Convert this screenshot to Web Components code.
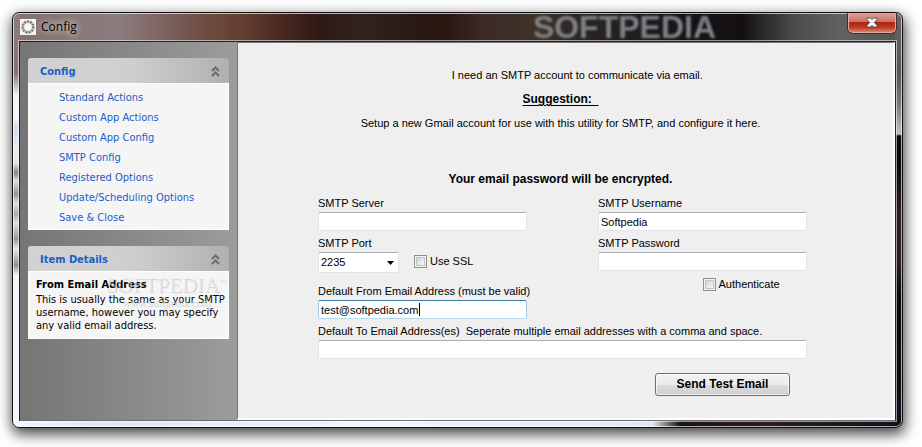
<!DOCTYPE html>
<html lang="en">
<head>
<meta charset="utf-8">
<title>Config</title>
<style>
  html, body { height: 100%; margin: 0; }
  body {
    box-sizing: border-box;
    display: flex;
    padding: 12px 19px 19px 12px;
    background: #fff;
    color: #000;
    font: 11px/17px "Liberation Sans", Arial, sans-serif;
  }
</style>
</head>
<body>

<app-window caption="Config">
  <side-bar slot="side">
    <side-panel heading="Config">
      <nav-list>
        <nav-item>Standard Actions</nav-item>
        <nav-item>Custom App Actions</nav-item>
        <nav-item>Custom App Config</nav-item>
        <nav-item>SMTP Config</nav-item>
        <nav-item>Registered Options</nav-item>
        <nav-item>Update/Scheduling Options</nav-item>
        <nav-item>Save &amp; Close</nav-item>
      </nav-list>
    </side-panel>
    <side-panel heading="Item Details">
      <item-details heading="From Email Address">This is usually the same as your SMTP username, however you may specify any valid email address.</item-details>
    </side-panel>
  </side-bar>
  <smtp-form></smtp-form>
</app-window>

<script>
/**
 * Small base class, attaches the shadow root and fills it from render()
 **/
class BaseElement extends HTMLElement {
  constructor() {
    super();
    this.attachShadow({ mode: "open" });
  }

  connectedCallback() {
    this.shadowRoot.innerHTML = this.render();
  }

  attr(name) {
    return this.getAttribute(name) || "";
  }
}

class AppWindow extends BaseElement {
  render() {
    return `
      <style>
        :host {
          flex: 1;
          display: flex;
          flex-direction: column;
          box-sizing: border-box;
          min-width: 0;
          padding: 0 6px 6px;
          border: 1px solid #111;
          border-radius: 7px;
          /* glass frame: left edge, right edge, bottom edge, title bar */
          background:
            linear-gradient(#8d7f7c, #86726f 60px, #f0f4fb 82px, #f4f8fe 105px, #cfdcec 114px, #e6edf4 135px, #dfe7ee 150px, #84888e 160px, #dbe4ea 168px, #8d9299 181px, #dbe4ea 190px, #a5abb2 201px, #dbe4ea 210px, #9298a0 226px, #e4ebf0 236px, #8d8e94 252px, #eef6fe 262px) left / 7px 100% no-repeat,
            linear-gradient(#666, #555 60px, #777 90px, #c2c0c0 121px, #0c0c0c 123px, #0a0a0c 150px, #2a1d28 200px, #2a1d28 250px, #08080c 285px, #10121a) right / 7px 100% no-repeat,
            linear-gradient(90deg, #eef6fe, #dfe8f2 10%, #eef6fe 40%, #e3ebf2 70%, #dde6ec 72%, #1c1216 75%, #2a1d24 85%, #10121a) bottom / 100% 7px no-repeat,
            linear-gradient(90deg, #85706c, #8b7c7e 12%, #6d4a40 22%, #643d31 26%, #3d211b 32%, #2c1a14 35%, #33231f 39%, #2a1a13 45%, #2b1711 49%, #3d2a2a 53%, #3e3326 59%, #2a2426 64%, #171317 76%, #141012 82%, #4c4c4c 88%, #616161 93%, #555);
          box-shadow:
            inset 0 0 0 1px rgba(255, 255, 255, .65),
            1px 5px 14px 1px rgba(0, 0, 0, .75);
        }

        header {
          display: flex;
          align-items: stretch;
          gap: 5px;
          height: 28px;
          padding-left: 1px;
          position: relative;
          font: 12px/28px "Open Sans", "Noto Sans", sans-serif;
        }

        .icon {
          align-self: center;
          width: 16px;
          height: 16px;
        }

        h1 {
          flex: 1;
          margin: 0;
          font: inherit;
          text-shadow: 0 0 6px rgba(255, 255, 255, .7), 0 0 10px rgba(255, 255, 255, .7);
        }

        /* wallpaper lettering seen through the glass */
        .backdrop {
          position: absolute;
          right: 180px;
          top: 0;
          color: #7f8185;
          font: bold 32px/28px "Liberation Sans", Arial, sans-serif;
          filter: blur(1px);
        }

        button {
          align-self: flex-start;
          position: relative;
          width: 48px;
          height: 20px;
          padding: 0;
          border: 1px solid #e0aaa4;
          border-top: 0;
          border-radius: 0 0 5px 5px;
          background: linear-gradient(#dba49b, #cc6f63 46%, #b02310 50%, #bd3a22 75%, #dd8069);
          box-shadow: 0 0 0 1px rgba(50, 12, 10, .6);
        }

        button svg {
          display: block;
          margin: auto;
        }

        .client {
          flex: 1;
          display: flex;
          min-height: 0;
          border: 1px solid #222;
          border-bottom-color: #6c6c70;
          box-shadow: 0 0 0 1px rgba(255, 255, 255, .55);
          background: #efefef;
        }

        main {
          flex: 1;
          min-width: 0;
          border: 1px solid #777;
          border-width: 1px 2px 2px 1px;
          border-right-color: #fff;
          border-bottom-color: #fff;
        }
      </style>
      <header>
        <svg class="icon" viewBox="0 0 16 16">
          <rect width="16" height="16" fill="#f4f4f4"/>
          <circle cx="8" cy="8" r="5.2" fill="none" stroke="#bbb" stroke-width="3"/>
          <circle cx="8" cy="8" r="5.7" fill="none" stroke="#555" stroke-width="1.6" stroke-dasharray="1.1 2.1"/>
          <circle cx="8" cy="8" r="4.5" fill="none" stroke="#888" stroke-width="1" stroke-dasharray="1.3 1.6"/>
          <circle cx="8" cy="8" r="3.6" fill="#f8f8f8"/>
        </svg>
        <h1>${this.attr("caption")}</h1>
        <span class="backdrop" aria-hidden="true">SOFTPEDIA</span>
        <button type="button" aria-label="Close">
          <svg width="12" height="11" viewBox="0 0 12 11">
            <path d="M1 1h3.500L6 2.600 7.500 1H11v1.500L8.300 5.500l2.700 3V10H7.500L6 8.400 4.500 10H1V8.500l2.700-3L1 2.500z" fill="#f8f8f8" stroke="#53535f"/>
          </svg>
        </button>
      </header>
      <div class="client">
        <slot name="side"></slot>
        <main><slot></slot></main>
      </div>
    `;
  }
}

class SideBar extends BaseElement {
  render() {
    return `
      <style>
        :host {
          flex: none;
          display: flex;
          flex-direction: column;
          gap: 16px;
          box-sizing: border-box;
          width: 217px;
          padding: 16px 8px;
          background: linear-gradient(90deg, #757575, #9c9c9c);
          font-family: "DejaVu Sans Condensed", "DejaVu Sans", sans-serif;
        }
      </style>
      <slot></slot>
    `;
  }
}

class SidePanel extends BaseElement {
  render() {
    return `
      <style>
        :host { display: block; }

        header {
          display: flex;
          align-items: center;
          justify-content: space-between;
          height: 25px;
          box-sizing: border-box;
          padding: 1px 9px 0 12px;
          border-radius: 3px 3px 0 0;
          background: linear-gradient(90deg, #d2d2d2, #cfcfcf 50%, #b0b0b0);
        }

        h2 {
          margin: 0;
          color: #215dc6;
          font-size: 11px;
        }

        .body {
          border: 1px solid #fff;
          background: #f5f5f5;
        }

        svg {
          fill: none;
          stroke: #6b6b6b;
          stroke-width: 2;
        }
      </style>
      <header>
        <h2>${this.attr("heading")}</h2>
        <svg width="9" height="11" viewBox="0 0 9 11">
          <path d="M1 5l3.500-3.500L8 5M1 10l3.500-3.500L8 10"/>
        </svg>
      </header>
      <div class="body"><slot></slot></div>
    `;
  }
}

class NavList extends BaseElement {
  render() {
    return `
      <style>
        :host { display: block; }

        nav {
          display: flex;
          flex-direction: column;
          padding: 4px 0 1px 30px;
        }
      </style>
      <nav><slot></slot></nav>
    `;
  }
}

class NavItem extends BaseElement {
  render() {
    return `
      <style>
        :host {
          display: block;
          line-height: 20px;
        }

        a {
          color: #215dc6;
          text-decoration: none;
        }
      </style>
      <a href="#"><slot></slot></a>
    `;
  }
}

class ItemDetails extends BaseElement {
  render() {
    return `
      <style>
        :host {
          display: block;
          position: relative;
          padding: 4px 0 6px 7px;
        }

        h3 {
          margin: 0;
          font-size: 11px;
          line-height: 17px;
        }

        p {
          margin: 0;
          line-height: 13px;
        }

        .watermark {
          position: absolute;
          top: 2px;
          right: 2px;
          display: grid;
          justify-items: center;
          color: rgba(245, 245, 245, .5);
          font: 21px/22px "Liberation Serif", serif;
          text-shadow: 1px 1px 1px rgba(0, 0, 0, .16);
          pointer-events: none;
        }

        .watermark sup {
          font-size: 7px;
          line-height: 7px;
        }

        .watermark small {
          font-size: 11px;
          line-height: 12px;
        }
      </style>
      <h3>${this.attr("heading")}</h3>
      <p><slot></slot></p>
      <div class="watermark" aria-hidden="true">
        <span>SOFTPEDIA<sup>™</sup></span>
        <small>www.softpedia.com</small>
      </div>
    `;
  }
}

class TextField extends BaseElement {
  render() {
    return `
      <style>
        :host { display: block; }

        label {
          display: block;
          white-space: nowrap;
        }

        input {
          display: block;
          box-sizing: border-box;
          width: 100%;
          height: 19px;
          margin: 0;
          padding: 0 2px;
          border: 1px solid #e2e3ea;
          border-top-color: #abadb3;
          border-radius: 2px;
          outline: 0;
          background: #fff;
          color: #000;
          font: inherit;
        }

        /* the caret is painted at the end of the value, steady */
        input.active {
          border-color: #3d7bad #a4c9e3 #b7d9ed;
          background: linear-gradient(#000, #000) var(--caret, 2px) 2px / 1px 13px no-repeat #fff;
          caret-color: transparent;
        }
      </style>
      <label for="field">${this.attr("label")}</label>
      <input id="field" type="${this.attr("type") || "text"}" value="${this.attr("value")}">
    `;
  }

  connectedCallback() {
    super.connectedCallback();
    if (this.hasAttribute("active")) {
      this.input = this.shadowRoot.querySelector("input");
      this.input.classList.add("active");
      this.input.addEventListener("input", () => this.placeCaret());
      this.placeCaret();
    }
  }

  placeCaret() {
    let ctx = document.createElement("canvas").getContext("2d");
    let style = getComputedStyle(this.input);
    ctx.font = `${style.fontSize} ${style.fontFamily}`;
    let width = Math.ceil(ctx.measureText(this.input.value).width);
    this.input.style.setProperty("--caret", width + 2 + "px");
  }
}

class SelectField extends BaseElement {
  render() {
    return `
      <style>
        :host { display: block; }

        label { display: block; }

        select {
          display: block;
          appearance: none;
          box-sizing: border-box;
          width: 81px;
          height: 21px;
          margin: 0;
          padding: 0 16px 0 2px;
          border: 1px solid #e2e3ea;
          border-top-color: #abadb3;
          border-radius: 2px;
          background: #fff;
          color: #000;
          font: 11px/19px "Liberation Sans", Arial, sans-serif;
        }

        .box {
          display: grid;
          justify-content: start;
          align-items: center;
        }

        .box > * { grid-area: 1 / 1; }

        svg {
          justify-self: end;
          margin-right: 5px;
          pointer-events: none;
        }
      </style>
      <label for="field">${this.attr("label")}</label>
      <div class="box">
        <select id="field"><option>${this.attr("value")}</option></select>
        <svg width="7" height="4" viewBox="0 0 7 4"><path d="M0 0h7L3.500 4z"/></svg>
      </div>
    `;
  }
}

class CheckField extends BaseElement {
  render() {
    return `
      <style>
        :host { display: block; }

        label {
          display: flex;
          align-items: center;
          gap: 3px;
        }

        input {
          appearance: none;
          box-sizing: border-box;
          width: 13px;
          height: 13px;
          margin: 0;
          border: 1px solid #8e8f8f;
          background: linear-gradient(135deg, #c4c9d0, #f4f4f4 75%);
          box-shadow: inset 0 0 0 1px #f4f4f4, inset 0 0 0 2px #c0c4ca;
        }
      </style>
      <label><input type="checkbox"><slot></slot></label>
    `;
  }
}

class PushButton extends BaseElement {
  render() {
    return `
      <style>
        :host { display: block; }

        button {
          display: block;
          width: 135px;
          height: 23px;
          padding: 0;
          border: 1px solid #707070;
          border-radius: 3px;
          background: linear-gradient(#f2f2f2, #ebebeb 50%, #dcdcdc 50%, #cfcfcf);
          box-shadow: inset 0 0 0 1px rgba(255, 255, 255, .7);
          color: #000;
          font: bold 12px/17px "Liberation Sans", Arial, sans-serif;
        }
      </style>
      <button type="button"><slot></slot></button>
    `;
  }
}

class SmtpForm extends BaseElement {
  render() {
    return `
      <style>
        :host { display: block; }

        .intro {
          display: grid;
          gap: 7px;
          padding: 24px 10px 0 0;
          text-align: center;
        }

        p {
          margin: 0;
          white-space: pre;
        }

        b { font-size: 12px; }

        u { text-underline-offset: 2px; }

        .note { margin-top: 32px; }

        form {
          display: grid;
          gap: 4px;
          padding: 7px 86px 0 80px;
        }

        .columns {
          display: grid;
          grid-template-columns: 1fr 1fr;
          gap: 71px;
        }

        .stack {
          display: flex;
          flex-direction: column;
          gap: 4px;
          min-width: 0;
        }

        .row {
          display: flex;
          align-items: flex-end;
          gap: 15px;
          margin-bottom: 6px;
        }

        .row check-field { margin-bottom: 3px; }

        .auth { margin: 1px 0 0 50%; }

        push-button {
          justify-self: end;
          margin: 10px 17px 0 0;
        }
      </style>
      <div class="intro">
        <p>           I need an SMTP account to communicate via email.</p>
        <p><b><u>Suggestion:&nbsp; </u></b></p>
        <p>Setup a new Gmail account for use with this utility for SMTP, and configure it here.</p>
        <p class="note"><b>Your email password will be encrypted.</b></p>
      </div>
      <form>
        <div class="columns">
          <div class="stack">
            <text-field label="SMTP Server"></text-field>
            <div class="row">
              <select-field label="SMTP Port" value="2235"></select-field>
              <check-field>Use SSL</check-field>
            </div>
            <text-field label="Default From Email Address (must be valid)" value="test@softpedia.com" active></text-field>
          </div>
          <div class="stack">
            <text-field label="SMTP Username" value="Softpedia"></text-field>
            <text-field label="SMTP Password" type="password"></text-field>
            <check-field class="auth">Authenticate</check-field>
          </div>
        </div>
        <text-field label="Default To Email Address(es)&nbsp; Seperate multiple email addresses with a comma and space."></text-field>
        <push-button>Send Test Email</push-button>
      </form>
    `;
  }
}

customElements.define("text-field", TextField);
customElements.define("select-field", SelectField);
customElements.define("check-field", CheckField);
customElements.define("push-button", PushButton);
customElements.define("smtp-form", SmtpForm);
customElements.define("nav-item", NavItem);
customElements.define("nav-list", NavList);
customElements.define("item-details", ItemDetails);
customElements.define("side-panel", SidePanel);
customElements.define("side-bar", SideBar);
customElements.define("app-window", AppWindow);
</script>
</body>
</html>
